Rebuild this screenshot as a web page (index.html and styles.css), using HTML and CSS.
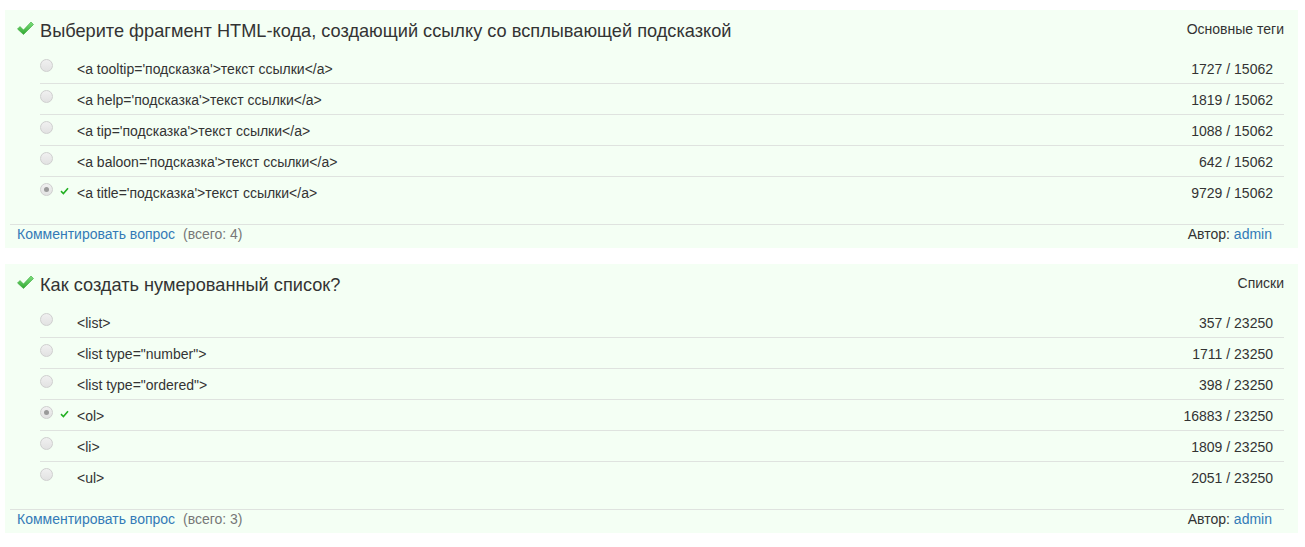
FILE: index.html
```html
<!DOCTYPE html>
<html lang="ru">
<head>
<meta charset="utf-8">
<title>Вопросы</title>
<link rel="stylesheet" href="styles.css">
</head>
<body>
<div class="card">
  <div class="head">
    <div class="title">
      <svg class="bigcheck" width="17" height="15" viewBox="0 0 17 15"><defs><linearGradient id="g1" x1="0" y1="0" x2="0" y2="1"><stop offset="0" stop-color="#7ee07e"/><stop offset="1" stop-color="#2fa82f"/></linearGradient></defs><path d="M0.5 8 L3 5.5 L6.5 9 L14 1 L16.5 3.5 L6.5 13.5 Z" fill="url(#g1)" stroke="#3aa83a" stroke-width="0.6" stroke-linejoin="round"/></svg>
      <span>Выберите фрагмент HTML-кода, создающий ссылку со всплывающей подсказкой</span>
    </div>
    <div class="cat">Основные теги</div>
  </div>
  <div class="list">
    <div class="row"><span class="radio"></span><span class="mark"></span><span class="txt">&lt;a tooltip='подсказка'&gt;текст ссылки&lt;/a&gt;</span><span class="num">1727 / 15062</span></div>
    <div class="row"><span class="radio"></span><span class="mark"></span><span class="txt">&lt;a help='подсказка'&gt;текст ссылки&lt;/a&gt;</span><span class="num">1819 / 15062</span></div>
    <div class="row"><span class="radio"></span><span class="mark"></span><span class="txt">&lt;a tip='подсказка'&gt;текст ссылки&lt;/a&gt;</span><span class="num">1088 / 15062</span></div>
    <div class="row"><span class="radio"></span><span class="mark"></span><span class="txt">&lt;a baloon='подсказка'&gt;текст ссылки&lt;/a&gt;</span><span class="num">642 / 15062</span></div>
    <div class="row"><span class="radio on"></span><span class="mark"><svg width="9" height="8" viewBox="0 0 9 8"><path d="M1 4.2 L3.4 6.5 L8 1.2" fill="none" stroke="#22b022" stroke-width="1.6"/></svg></span><span class="txt">&lt;a title='подсказка'&gt;текст ссылки&lt;/a&gt;</span><span class="num">9729 / 15062</span></div>
  </div>
  <div class="foot">
    <div><a class="link" href="#">Комментировать вопрос</a> <span class="muted">(всего: 4)</span></div>
    <div>Автор: <a class="link" href="#">admin</a></div>
  </div>
</div>

<div class="card">
  <div class="head">
    <div class="title">
      <svg class="bigcheck" width="17" height="15" viewBox="0 0 17 15"><defs><linearGradient id="g2" x1="0" y1="0" x2="0" y2="1"><stop offset="0" stop-color="#7ee07e"/><stop offset="1" stop-color="#2fa82f"/></linearGradient></defs><path d="M0.5 8 L3 5.5 L6.5 9 L14 1 L16.5 3.5 L6.5 13.5 Z" fill="url(#g2)" stroke="#3aa83a" stroke-width="0.6" stroke-linejoin="round"/></svg>
      <span>Как создать нумерованный список?</span>
    </div>
    <div class="cat">Списки</div>
  </div>
  <div class="list">
    <div class="row"><span class="radio"></span><span class="mark"></span><span class="txt">&lt;list&gt;</span><span class="num">357 / 23250</span></div>
    <div class="row"><span class="radio"></span><span class="mark"></span><span class="txt">&lt;list type="number"&gt;</span><span class="num">1711 / 23250</span></div>
    <div class="row"><span class="radio"></span><span class="mark"></span><span class="txt">&lt;list type="ordered"&gt;</span><span class="num">398 / 23250</span></div>
    <div class="row"><span class="radio on"></span><span class="mark"><svg width="9" height="8" viewBox="0 0 9 8"><path d="M1 4.2 L3.4 6.5 L8 1.2" fill="none" stroke="#22b022" stroke-width="1.6"/></svg></span><span class="txt">&lt;ol&gt;</span><span class="num">16883 / 23250</span></div>
    <div class="row"><span class="radio"></span><span class="mark"></span><span class="txt">&lt;li&gt;</span><span class="num">1809 / 23250</span></div>
    <div class="row"><span class="radio"></span><span class="mark"></span><span class="txt">&lt;ul&gt;</span><span class="num">2051 / 23250</span></div>
  </div>
  <div class="foot">
    <div><a class="link" href="#">Комментировать вопрос</a> <span class="muted">(всего: 3)</span></div>
    <div>Автор: <a class="link" href="#">admin</a></div>
  </div>
</div>
</body>
</html>
```

FILE: styles.css
```css
* { box-sizing: border-box; }
body {
  margin: 0;
  padding-top: 10px;
  background: #fff;
  font-family: "Liberation Sans", Arial, sans-serif;
  color: #333;
  font-size: 14px;
}
.card {
  margin: 0 7px 16px 5px;
  background: #f4fff4;
  padding: 0 14px 0 5px;
}
.head {
  display: flex;
  justify-content: space-between;
  align-items: flex-start;
  padding: 10px 0 0 7px;
  height: 43px;
}
.title {
  display: flex;
  align-items: center;
  font-size: 18.2px;
  line-height: 22px;
  color: #333;
}
.bigcheck {
  margin-right: 6px;
  margin-top: -6px;
}
.cat {
  font-size: 14px;
  line-height: 18px;
}
.list {
  margin-left: 30px;
  padding-bottom: 17px;
}
.row {
  display: flex;
  align-items: center;
  height: 31px;
  border-top: 1px solid #dfe3df;
  padding: 1px 11px 0 0;
}
.row:first-child {
  height: 30px;
  border-top: 0;
}
.radio {
  width: 13px;
  height: 13px;
  border-radius: 50%;
  border: 1px solid #cfcfcf;
  background: linear-gradient(#f0f0f0, #e2e2e2);
  position: relative;
  margin-top: -7px;
  flex: none;
}
.radio.on::after {
  content: "";
  position: absolute;
  left: 3px;
  top: 3px;
  width: 5px;
  height: 5px;
  border-radius: 50%;
  background: #9a9a9a;
}
.mark {
  width: 24px;
  display: flex;
  padding-left: 7px;
  margin-top: -3px;
  flex: none;
}
.txt { flex: 1; }
.num { text-align: right; }
.foot {
  display: flex;
  justify-content: space-between;
  border-top: 1px solid #dfe3df;
  padding: 0 12px 0 7px;
  line-height: 19px;
  height: 24px;
}
.link {
  color: #337ab7;
  text-decoration: none;
}
.muted {
  color: #777;
  margin-left: 4px;
}
```
